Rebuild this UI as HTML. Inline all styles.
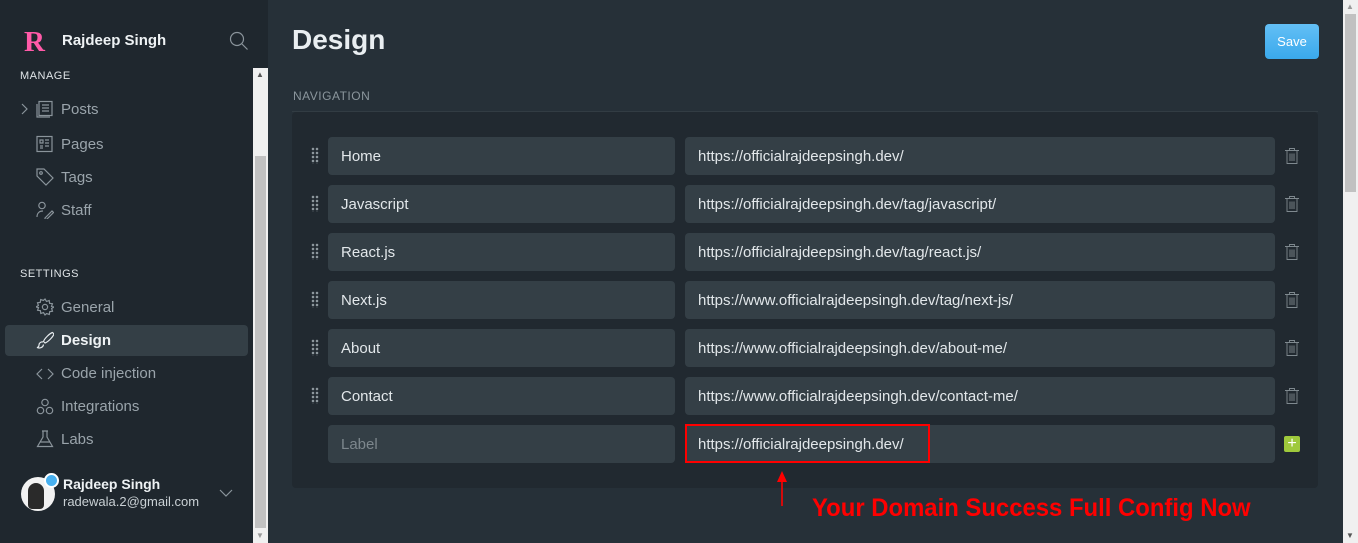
<!DOCTYPE html>
<html><head><style>
*{box-sizing:border-box;margin:0;padding:0}
body{width:1358px;height:543px;overflow:hidden;background:#263038;font-family:"Liberation Sans",sans-serif;position:relative}
.sb{position:absolute;left:0;top:0;width:268px;height:543px;background:#1f272e}
.t{position:absolute;white-space:nowrap}
.nav{color:#9aa4ab;font-size:15px}
.ic{position:absolute;stroke:#8a949b;fill:none;stroke-width:1.2}
.inp{position:absolute;height:38px;background:#343f46;border-radius:4px;color:#e2e7ea;font-size:15px;line-height:17px;padding:11px 0 0 13px}
.drag{position:absolute;width:8px;height:17px;background-image:radial-gradient(circle,#8c969c 1.2px,transparent 1.4px);background-size:4px 4px}
.trash{position:absolute}
</style></head><body>
<div class="sb">
<div class="t" style="left:24px;top:26px;font-size:29px;font-weight:bold;color:#ff5aa8;font-family:'Liberation Serif',serif">R</div>
<div class="t" style="left:62px;top:32px;font-size:15px;font-weight:bold;color:#eef2f4">Rajdeep Singh</div>
<svg class="ic" style="left:229px;top:31px" width="20" height="20" viewBox="0 0 20 20"><circle cx="8" cy="8" r="6.5"/><path d="M13 13l5.5 5.5"/></svg>
<div class="t" style="left:20px;top:70px;font-size:11px;color:#dfe4e7;letter-spacing:.5px">MANAGE</div>
<svg class="ic" style="left:20px;top:103px" width="8" height="12"><path d="M2 1l5 5-5 5"/></svg>
<svg class="ic" style="left:36px;top:100px" width="18" height="18"><rect x="3" y="1.5" width="13" height="14"/><path d="M1 4v13h13M6 5h7M6 8h7M6 11h7"/></svg>
<div class="t nav" style="left:61px;top:101px">Posts</div>
<svg class="ic" style="left:36px;top:135px" width="18" height="18"><rect x="1" y="1.5" width="15" height="15"/><path d="M4 5h3v3H4zM4 11h3M9 5h4M9 8h4M9 11h4M4 13h3"/></svg>
<div class="t nav" style="left:61px;top:136px">Pages</div>
<svg class="ic" style="left:36px;top:168px" width="18" height="18"><path d="M1 1h7l9 9-7 7-9-9z"/><circle cx="5" cy="5" r="1.3"/></svg>
<div class="t nav" style="left:61px;top:169px">Tags</div>
<svg class="ic" style="left:36px;top:201px" width="18" height="18"><circle cx="6" cy="4.5" r="3.2"/><path d="M1 16c0-4 2.5-6 6-6M9 17l7-7 1.5 1.5-7 7H9z"/></svg>
<div class="t nav" style="left:61px;top:202px">Staff</div>
<div class="t" style="left:20px;top:268px;font-size:11px;color:#dfe4e7;letter-spacing:.5px">SETTINGS</div>
<svg class="ic" style="left:36px;top:298px" width="18" height="18"><circle cx="9" cy="9" r="2.6"/><path d="M9 1l1.5 2.4 2.7-.9.4 2.8 2.8.4-.9 2.7L18 9l-2.4 1.5.9 2.7-2.8.4-.4 2.8-2.7-.9L9 17l-1.5-2.4-2.7.9-.4-2.8-2.8-.4.9-2.7L0 9l2.4-1.5-.9-2.7 2.8-.4.4-2.8 2.7.9z"/></svg>
<div class="t nav" style="left:61px;top:299px">General</div>
<div style="position:absolute;left:5px;top:325px;width:243px;height:31px;background:#343f46;border-radius:4px"></div>
<svg class="ic" style="left:36px;top:331px;stroke:#e6ebee" width="18" height="18"><path d="M16.5 1.5c-3 1-8 6-9 9l1.5 1.5c3-1 8-6 9-9zM7 11c-2-.5-4 1-4 3s-1.5 2.5-2 2.5c2 1 6 .5 6.5-3"/></svg>
<div class="t" style="left:61px;top:332px;font-size:15px;font-weight:bold;color:#eef2f4">Design</div>
<svg class="ic" style="left:36px;top:365px" width="18" height="18"><path d="M6 4L1 9l5 5M12 4l5 5-5 5"/></svg>
<div class="t nav" style="left:61px;top:365px">Code injection</div>
<svg class="ic" style="left:36px;top:398px" width="18" height="18"><circle cx="9" cy="4.5" r="3.2"/><circle cx="4.5" cy="12.5" r="3.2"/><circle cx="13.5" cy="12.5" r="3.2"/></svg>
<div class="t nav" style="left:61px;top:398px">Integrations</div>
<svg class="ic" style="left:36px;top:430px" width="18" height="18"><path d="M6 1h6M7 1v6L1.5 16.5h15L11 7V1M4 12h10"/></svg>
<div class="t nav" style="left:61px;top:431px">Labs</div>
<div style="position:absolute;left:21px;top:477px;width:34px;height:34px;border-radius:50%;background:#f2f2f2;overflow:hidden"><div style="position:absolute;left:7px;top:6px;width:16px;height:26px;background:#2a2a2a;border-radius:8px 8px 4px 4px"></div></div>
<div style="position:absolute;left:44px;top:473px;width:15px;height:15px;border-radius:50%;background:#48b0ef;border:2px solid #fff"></div>
<div class="t" style="left:63px;top:476px;font-size:14px;font-weight:bold;color:#eef2f4">Rajdeep Singh</div>
<div class="t" style="left:63px;top:494px;font-size:13px;color:#c9d0d4">radewala.2@gmail.com</div>
<svg class="ic" style="left:219px;top:489px" width="14" height="9"><path d="M1 1l6 6 6-6"/></svg>
<div style="position:absolute;left:253px;top:68px;width:15px;height:475px;background:#f0f0f0"></div>
<div style="position:absolute;left:255px;top:156px;width:11px;height:372px;background:#c1c1c1"></div>
<div class="t" style="left:256px;top:70px;font-size:8px;color:#555">▲</div>
<div class="t" style="left:256px;top:531px;font-size:8px;color:#999">▼</div>
</div>
<div class="t" style="left:292px;top:24px;font-size:28px;font-weight:bold;color:#e9eef1">Design</div>
<div style="position:absolute;left:1265px;top:24px;width:54px;height:35px;border-radius:4px;background:linear-gradient(#63bff5,#3aa9ec);color:#fff;font-size:13px;line-height:35px;text-align:center">Save</div>
<div class="t" style="left:293px;top:89px;font-size:12px;color:#8b969d;letter-spacing:.5px">NAVIGATION</div>
<div style="position:absolute;left:292px;top:111px;width:1026px;height:1px;background:#323c43"></div>
<div style="position:absolute;left:292px;top:112px;width:1026px;height:376px;background:#212930;border-radius:4px"></div>
<div id="rows"></div>
<div class="inp" style="left:328px;top:425px;width:347px;color:#7d878d">Label</div>
<div class="inp" style="left:685px;top:425px;width:590px">https://officialrajdeepsingh.dev/</div>
<div style="position:absolute;left:685px;top:424px;width:245px;height:39px;border:2px solid #f00"></div>
<div style="position:absolute;left:1284px;top:436px;width:16px;height:16px;background:#9fc93c;border-radius:2px;color:#fff;font-size:16px;line-height:15px;text-align:center">+</div>
<svg style="position:absolute;left:772px;top:468px" width="20" height="40"><path d="M10 38V8" stroke="#f00" stroke-width="1.6"/><path d="M5 14l5-11 5 11z" fill="#f00"/></svg>
<div class="t" style="left:812px;top:494px;font-size:25px;font-weight:bold;color:#f00;transform:scaleX(.955);transform-origin:left">Your Domain Success Full Config Now</div>
<div style="position:absolute;left:1343px;top:0;width:15px;height:543px;background:#f0f0f0"></div>
<div style="position:absolute;left:1345px;top:14px;width:11px;height:178px;background:#c1c1c1"></div>
<div class="t" style="left:1346px;top:2px;font-size:8px;color:#999">▲</div>
<div class="t" style="left:1346px;top:531px;font-size:8px;color:#555">▼</div>
<script>
var d=[["Home","https://officialrajdeepsingh.dev/"],["Javascript","https://officialrajdeepsingh.dev/tag/javascript/"],["React.js","https://officialrajdeepsingh.dev/tag/react.js/"],["Next.js","https://www.officialrajdeepsingh.dev/tag/next-js/"],["About","https://www.officialrajdeepsingh.dev/about-me/"],["Contact","https://www.officialrajdeepsingh.dev/contact-me/"]];
var h="";d.forEach(function(r,i){var y=137+48*i;
h+='<div class="drag" style="left:311px;top:'+(y+10)+'px"></div><div class="inp" style="left:328px;top:'+y+'px;width:347px">'+r[0]+'</div><div class="inp" style="left:685px;top:'+y+'px;width:590px">'+r[1]+'</div><svg class="trash" style="left:1284px;top:'+(y+10)+'px" width="16" height="18" viewBox="0 0 16 18"><g fill="none" stroke="#7f898f" stroke-width="0.9"><path d="M1 3.5h14M5.5 3.5V1.5h5v2M3 3.5v13h10v-13M6 6.5v7.5M8 6.5v7.5M10 6.5v7.5"/></g></svg>';});
document.getElementById("rows").innerHTML=h;
</script>
</body></html>
